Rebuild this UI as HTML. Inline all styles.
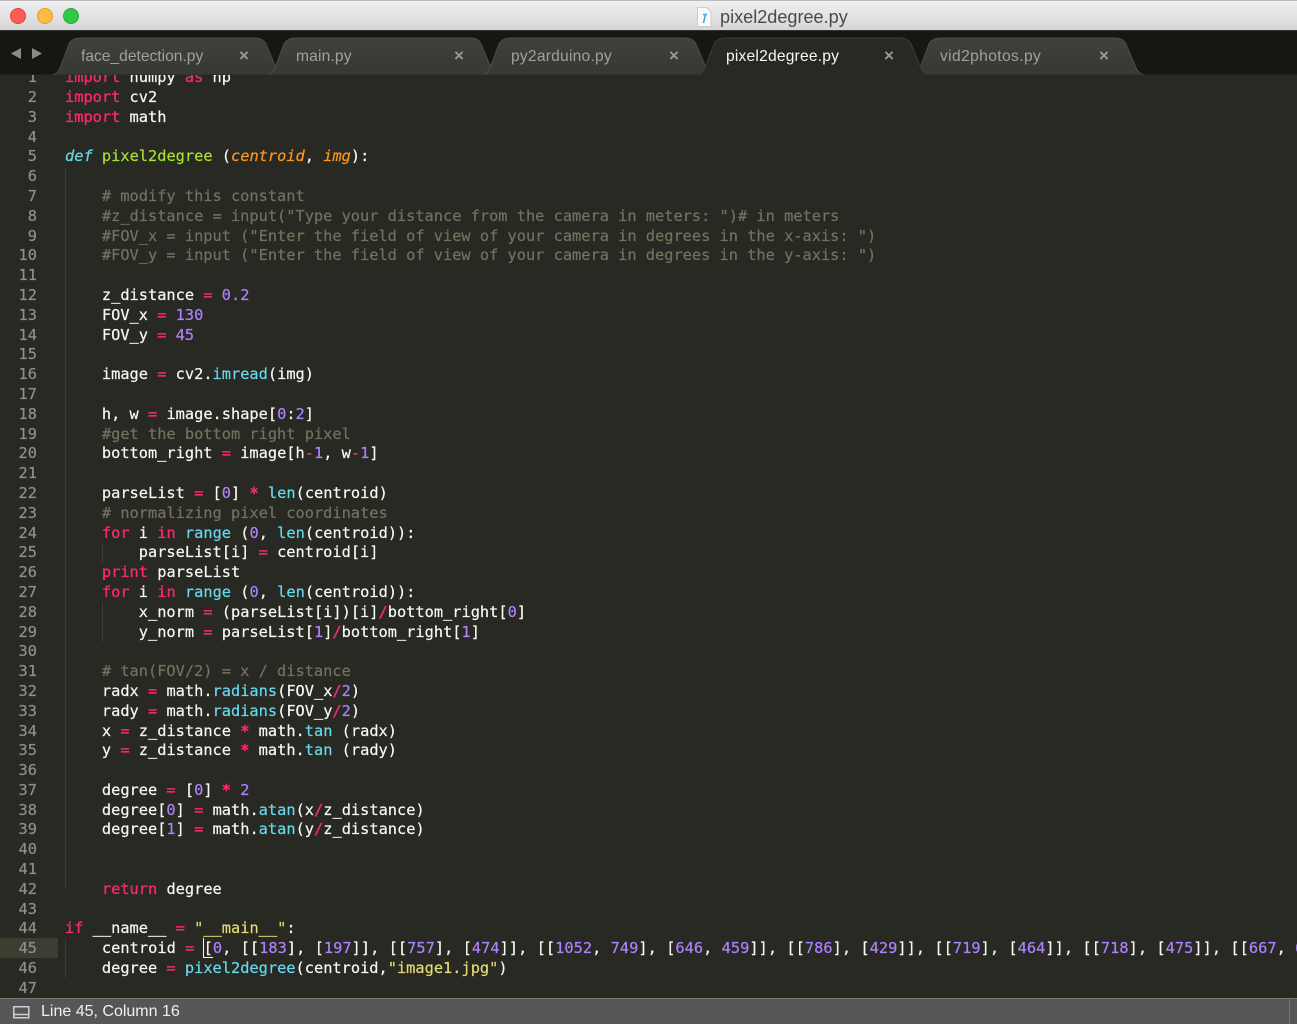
<!DOCTYPE html>
<html><head><meta charset="utf-8">
<style>
html,body{margin:0;padding:0;background:#282923;}
#w{position:relative;width:1297px;height:1024px;overflow:hidden;background:#282923;font-family:"Liberation Sans",sans-serif;}
#title{position:absolute;left:0;top:0;width:1297px;height:31px;background:linear-gradient(#f0f0f0,#d6d6d6);border-top:1px solid #bbb;box-sizing:border-box;border-bottom:1px solid #333;z-index:2;}
.l{position:absolute;width:16px;height:16px;border-radius:50%;top:7px;box-sizing:border-box;}
#tt{position:absolute;left:720px;top:6px;font-size:18.1px;line-height:20px;color:#4a4a4a;white-space:nowrap;}
#strip{position:absolute;left:0;top:30px;width:1297px;height:45px;background:#161612;}
.tab{position:absolute;top:47px;font-size:15.6px;line-height:19px;color:#a0a09c;white-space:nowrap;}
.x{position:absolute;top:46px;font-size:17px;line-height:19px;color:#9a9a96;font-weight:bold;}
#ed{position:absolute;left:0;top:75px;width:1297px;height:923px;overflow:hidden;background:#282923;}
pre{margin:0;position:absolute;font-family:"DejaVu Sans Mono",monospace;font-size:15.32px;line-height:19.8px;white-space:pre;-webkit-text-stroke:0.2px;}
#code{left:65px;top:-6.8px;color:#f8f8f2;}
#gut{left:0;width:37px;top:-6.8px;text-align:right;color:#8f908a;}
.g{position:absolute;width:1px;background:#3c3d37;}
i,b{font-weight:normal;font-style:normal}
.k{color:#f92672;-webkit-text-stroke:0.35px}.st{-webkit-text-stroke:0.7px}.s{color:#66d9ef}.f{color:#a6e22e}.a{color:#fd971f;font-style:italic}.p{color:#ae81ff}.c{color:#75715e}.y{color:#e6db74}.d{color:#66d9ef;font-style:italic}
#st{position:absolute;left:0;top:998px;width:1297px;height:26px;background:#565656;border-top:1px solid #777;box-sizing:border-box;}
#stt{position:absolute;left:41px;top:3px;font-size:16px;line-height:20px;color:#f0f0f0;white-space:nowrap;}
</style></head><body>
<div id="w">
<div id="title">
<div class="l" style="left:10px;background:#fc5b57;border:1px solid #e0443e"></div>
<div class="l" style="left:37px;background:#fdbc40;border:1px solid #e0a028"></div>
<div class="l" style="left:63px;background:#33c748;border:1px solid #28a83a"></div>
<svg style="position:absolute;left:696px;top:6px" width="16" height="20" viewBox="0 0 16 20"><path d="M1.500 .5H10.500L15 5V19.500H1.500Z" fill="#fafafa" stroke="#ccc"/><path d="M7 7.500H11M9.500 7.500L7.500 16" stroke="#3ba7e0" stroke-width="1.500" fill="none"/></svg>
<div id="tt">pixel2degree.py</div>
</div>
<div id="strip"></div>
<svg style="position:absolute;left:10px;top:47px" width="34" height="14" viewBox="0 0 34 14"><path d="M1 6.500L11 1V12Z M32 6.500L22 1V12Z" fill="#8a8a86"/></svg>
<svg style="position:absolute;left:0;top:30px" width="1297" height="46" viewBox="0 0 1297 46">
<defs>
<path id="t" d="M0 45C6 45 8 42 10 38L19 14C21 10 25 8 31 8H205C211 8 214 10 216 14L226 38C228 42 231 45 236 45Z"/>
<linearGradient id="tg" x1="0" y1="0" x2="0" y2="1"><stop offset="0" stop-color="#40403d"/><stop offset="1" stop-color="#373734"/></linearGradient>
</defs>
<use href="#t" x="50" fill="url(#tg)" stroke="#4c4c48"/>
<use href="#t" x="265" fill="url(#tg)" stroke="#4c4c48"/>
<use href="#t" x="480" fill="url(#tg)" stroke="#4c4c48"/>
<use href="#t" x="910" fill="url(#tg)" stroke="#4c4c48"/>
<use href="#t" x="695" fill="#282923" stroke="#3c3c38"/>
<rect x="0" y="44.500" width="1297" height="1" fill="#2a2a26"/>
</svg>
<div class="tab" style="left:81px">face_detection.py</div><div class="x" style="left:239px">×</div>
<div class="tab" style="left:296px;letter-spacing:.15px">main.py</div><div class="x" style="left:454px">×</div>
<div class="tab" style="left:511px;letter-spacing:.23px">py2arduino.py</div><div class="x" style="left:669px">×</div>
<div class="tab" style="left:726px;color:#f8f8f2;letter-spacing:.2px">pixel2degree.py</div><div class="x" style="left:884px">×</div>
<div class="tab" style="left:940px;letter-spacing:.38px">vid2photos.py</div><div class="x" style="left:1099px">×</div>
<div id="ed">
<div style="position:absolute;left:0;top:863px;width:58px;height:20px;background:#3e3d32"></div>
<div class="g" style="left:65px;top:93px;height:720px"></div>
<div class="g" style="left:65px;top:863px;height:40px"></div>
<div class="g" style="left:102px;top:468px;height:20px"></div>
<div class="g" style="left:102px;top:527px;height:40px"></div>
<div style="position:absolute;left:203px;top:863px;width:1px;height:20px;background:#f8f8f0"></div>
<div style="position:absolute;left:204px;top:882px;width:9px;height:1px;background:#f8f8f0"></div>
<pre id="gut">1
2
3
4
5
6
7
8
9
10
11
12
13
14
15
16
17
18
19
20
21
22
23
24
25
26
27
28
29
30
31
32
33
34
35
36
37
38
39
40
41
42
43
44
45
46
47</pre>
<pre id="code"><b class="k">import</b> numpy <b class="k">as</b> np
<b class="k">import</b> cv2
<b class="k">import</b> math

<b class="d">def</b> <b class="f">pixel2degree</b> (<b class="a">centroid</b>, <b class="a">img</b>):

    <b class="c"># modify this constant</b>
    <b class="c">#z_distance = input("Type your distance from the camera in meters: ")# in meters</b>
    <b class="c">#FOV_x = input ("Enter the field of view of your camera in degrees in the x-axis: ")</b>
    <b class="c">#FOV_y = input ("Enter the field of view of your camera in degrees in the y-axis: ")</b>

    z_distance <b class="k">=</b> <b class="p">0.2</b>
    FOV_x <b class="k">=</b> <b class="p">130</b>
    FOV_y <b class="k">=</b> <b class="p">45</b>

    image <b class="k">=</b> cv2.<b class="s">imread</b>(img)

    h, w <b class="k">=</b> image.shape[<b class="p">0</b>:<b class="p">2</b>]
    <b class="c">#get the bottom right pixel</b>
    bottom_right <b class="k">=</b> image[h<b class="k">-</b><b class="p">1</b>, w<b class="k">-</b><b class="p">1</b>]

    parseList <b class="k">=</b> [<b class="p">0</b>] <b class="k st">*</b> <b class="s">len</b>(centroid)
    <b class="c"># normalizing pixel coordinates</b>
    <b class="k">for</b> i <b class="k">in</b> <b class="s">range</b> (<b class="p">0</b>, <b class="s">len</b>(centroid)):
        parseList[i] <b class="k">=</b> centroid[i]
    <b class="k">print</b> parseList
    <b class="k">for</b> i <b class="k">in</b> <b class="s">range</b> (<b class="p">0</b>, <b class="s">len</b>(centroid)):
        x_norm <b class="k">=</b> (parseList[i])[i]<b class="k">/</b>bottom_right[<b class="p">0</b>]
        y_norm <b class="k">=</b> parseList[<b class="p">1</b>]<b class="k">/</b>bottom_right[<b class="p">1</b>]

    <b class="c"># tan(FOV/2) = x / distance</b>
    radx <b class="k">=</b> math.<b class="s">radians</b>(FOV_x<b class="k">/</b><b class="p">2</b>)
    rady <b class="k">=</b> math.<b class="s">radians</b>(FOV_y<b class="k">/</b><b class="p">2</b>)
    x <b class="k">=</b> z_distance <b class="k st">*</b> math.<b class="s">tan</b> (radx)
    y <b class="k">=</b> z_distance <b class="k st">*</b> math.<b class="s">tan</b> (rady)

    degree <b class="k">=</b> [<b class="p">0</b>] <b class="k st">*</b> <b class="p">2</b>
    degree[<b class="p">0</b>] <b class="k">=</b> math.<b class="s">atan</b>(x<b class="k">/</b>z_distance)
    degree[<b class="p">1</b>] <b class="k">=</b> math.<b class="s">atan</b>(y<b class="k">/</b>z_distance)


    <b class="k">return</b> degree

<b class="k">if</b> __name__ <b class="k">=</b> <b class="y">"__main__"</b>:
    <span style="letter-spacing:.03px">centroid <b class="k">=</b> [<b class="p">0</b>, [[<b class="p">183</b>], [<b class="p">197</b>]], [[<b class="p">757</b>], [<b class="p">474</b>]], [[<b class="p">1052</b>, <b class="p">749</b>], [<b class="p">646</b>, <b class="p">459</b>]], [[<b class="p">786</b>], [<b class="p">429</b>]], [[<b class="p">719</b>], [<b class="p">464</b>]], [[<b class="p">718</b>], [<b class="p">475</b>]], [[<b class="p">667</b>, <b class="p">650</b>]]]</span>
    degree <b class="k">=</b> <b class="s">pixel2degree</b>(centroid,<b class="y">"image1.jpg"</b>)
</pre>
</div>
<div id="st">
<svg style="position:absolute;left:13px;top:7px" width="17" height="13" viewBox="0 0 17 13"><rect x=".75" y=".75" width="15" height="11" fill="none" stroke="#cfcfcf" stroke-width="1.500"/><path d="M1 8.500H16" stroke="#cfcfcf" stroke-width="1.500"/></svg>
<div id="stt">Line 45, Column 16</div>
<div style="position:absolute;left:1289px;top:0;width:1px;height:26px;background:#777"></div>
</div>
</div>
</body></html>
